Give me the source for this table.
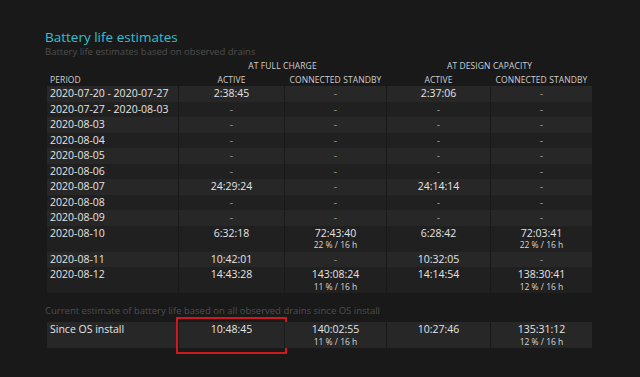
import React from 'react'

const rows = [
  { period: '2020-07-20 - 2020-07-27', fa: '2:38:45', fs: '-', da: '2:37:06', ds: '-' },
  { period: '2020-07-27 - 2020-08-03', fa: '-', fs: '-', da: '-', ds: '-' },
  { period: '2020-08-03', fa: '-', fs: '-', da: '-', ds: '-' },
  { period: '2020-08-04', fa: '-', fs: '-', da: '-', ds: '-' },
  { period: '2020-08-05', fa: '-', fs: '-', da: '-', ds: '-' },
  { period: '2020-08-06', fa: '-', fs: '-', da: '-', ds: '-' },
  { period: '2020-08-07', fa: '24:29:24', fs: '-', da: '24:14:14', ds: '-' },
  { period: '2020-08-08', fa: '-', fs: '-', da: '-', ds: '-' },
  { period: '2020-08-09', fa: '-', fs: '-', da: '-', ds: '-' },
  { period: '2020-08-10', fa: '6:32:18', fs: '72:43:40', fsSub: '22 % / 16 h', da: '6:28:42', ds: '72:03:41', dsSub: '22 % / 16 h' },
  { period: '2020-08-11', fa: '10:42:01', fs: '-', da: '10:32:05', ds: '-' },
  { period: '2020-08-12', fa: '14:43:28', fs: '143:08:24', fsSub: '11 % / 16 h', da: '14:14:54', ds: '138:30:41', dsSub: '12 % / 16 h' },
]

const cols = 'grid grid-cols-[131px_105px_101px_103px_101px] gap-x-px'

function Cell({ main, sub, bg, left, children }) {
  return (
    <div className={`${bg} relative ${left ? 'pl-[3px] text-left' : 'text-center'}`}>
      <div className={`leading-[15.5px] ${main === '-' ? 'text-[#9a9a9a]' : 'text-[#e4e4e4]'}`}>{main}</div>
      {sub && <div className="text-[8.5px] leading-[10.5px] text-[#d8d8d8] -mt-[1px] pb-px">{sub}</div>}
      {children}
    </div>
  )
}

export default function App() {
  return (
    <div
      className="w-[640px] h-[377px] bg-[#191919] pl-[45px] pt-[28px] overflow-hidden"
      style={{ fontFamily: '"Open Sans", "Noto Sans", sans-serif' }}
    >
      <h1 className="text-[13.5px] leading-[18px] text-[#2fc0d2] font-normal">Battery life estimates</h1>
      <p className="text-[9.5px] leading-[12px] text-[#4e4e4e]">Battery life estimates based on observed drains</p>

      <div className="pl-[2px] text-[10.5px]">
        {/* Header */}
        <div className={`${cols} text-[8.5px] text-[#cfcfcf] font-medium tracking-[0.1px] mt-px`}>
          <div className="leading-[14px]" />
          <div className="col-span-2 text-center leading-[14px]">AT FULL CHARGE</div>
          <div className="col-span-2 text-center leading-[14px]">AT DESIGN CAPACITY</div>
          <div className="pl-[3px] leading-[13px]">PERIOD</div>
          <div className="text-center leading-[13px]">ACTIVE</div>
          <div className="text-center leading-[13px]">CONNECTED STANDBY</div>
          <div className="text-center leading-[13px]">ACTIVE</div>
          <div className="text-center leading-[13px]">CONNECTED STANDBY</div>
        </div>

        {/* Rows */}
        <div>
          {rows.map((r, i) => {
            const bg = i % 2 === 0 ? 'bg-[#272727]' : 'bg-[#202020]'
            return (
              <div key={i} className={cols}>
                <Cell main={r.period} bg={bg} left />
                <Cell main={r.fa} bg={bg} />
                <Cell main={r.fs} sub={r.fsSub} bg={bg} />
                <Cell main={r.da} bg={bg} />
                <Cell main={r.ds} sub={r.dsSub} bg={bg} />
              </div>
            )
          })}
        </div>
      </div>

      <p className="text-[9.5px] leading-[12px] text-[#4e4e4e] mt-[12px]">
        Current estimate of battery life based on all observed drains since OS install
      </p>

      <div className="pl-[2px] text-[10.5px] mt-[5px]">
        <div className={cols}>
          <Cell main="Since OS install" bg="bg-[#272727]" left />
          <Cell main="10:48:45" bg="bg-[#272727]">
            <div className="absolute -left-[3px] -right-[3px] -top-[5px] -bottom-[6px] border-[2.5px] border-[#cc1a1e]" />
          </Cell>
          <Cell main="140:02:55" sub="11 % / 16 h" bg="bg-[#272727]" />
          <Cell main="10:27:46" bg="bg-[#272727]" />
          <Cell main="135:31:12" sub="12 % / 16 h" bg="bg-[#272727]" />
        </div>
      </div>
    </div>
  )
}
